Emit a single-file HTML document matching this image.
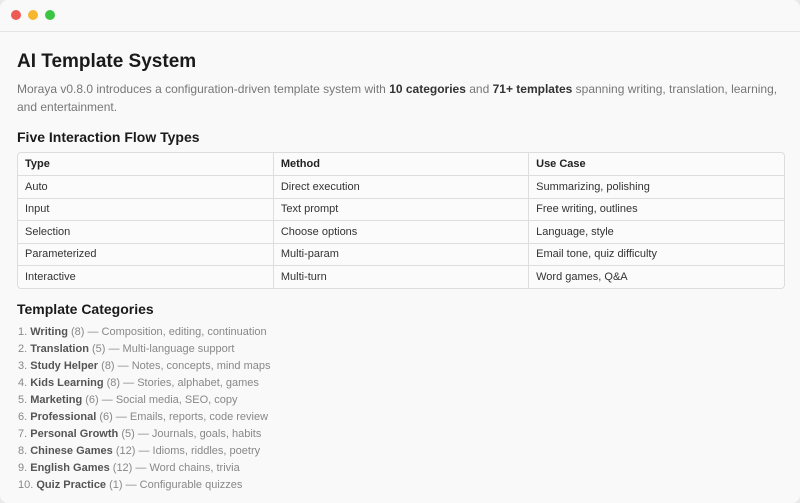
<!DOCTYPE html>
<html><head><style>
*{margin:0;padding:0;box-sizing:border-box}
body{width:800px;height:503px;background:#e9e9e9;font-family:"Liberation Sans",sans-serif;overflow:hidden}
.win{position:absolute;left:0;top:0;width:800px;height:503px;background:#f9f9f9;border-radius:8px;overflow:hidden}
.bar{height:32px;border-bottom:1px solid #e4e4e4;position:relative}
.dot{position:absolute;top:10px;width:10px;height:10px;border-radius:50%}
h1{position:absolute;left:17px;top:51px;font-size:19px;font-weight:bold;color:#1a1a1a}
p{position:absolute;left:17px;top:80px;width:770px;font-size:12px;line-height:18px;color:#777}
p b{color:#333}
h2{position:absolute;left:17px;font-size:14px;font-weight:bold;color:#1a1a1a}
.tw{position:absolute;left:17px;top:152px;width:768px;border:1px solid #ddd;border-radius:4px;overflow:hidden;background:#fbfbfb}
table{width:100%;border-collapse:collapse;font-size:11px;color:#333}
td{border-right:1px solid #ddd;border-bottom:1px solid #ddd;height:22.5px;padding:0 7px;width:256px}
td:last-child{border-right:none}
tr:last-child td{border-bottom:none}
tr:first-child td{font-weight:bold;color:#222}
ol{position:absolute;left:18px;top:324px;list-style:none;font-size:11px;line-height:17px;color:#888}
ol b{color:#555}
</style></head><body><div class="win">
<div class="bar"><div class="dot" style="left:11px;background:#ee5b55"></div><div class="dot" style="left:28px;background:#f6b630"></div><div class="dot" style="left:45px;background:#3cc443"></div></div>
<h1>AI Template System</h1>
<p>Moraya v0.8.0 introduces a configuration-driven template system with <b>10 categories</b> and <b>71+ templates</b> spanning writing, translation, learning, and entertainment.</p>
<h2 style="top:129px">Five Interaction Flow Types</h2>
<div class="tw"><table>
<tr><td>Type</td><td>Method</td><td>Use Case</td></tr>
<tr><td>Auto</td><td>Direct execution</td><td>Summarizing, polishing</td></tr>
<tr><td>Input</td><td>Text prompt</td><td>Free writing, outlines</td></tr>
<tr><td>Selection</td><td>Choose options</td><td>Language, style</td></tr>
<tr><td>Parameterized</td><td>Multi-param</td><td>Email tone, quiz difficulty</td></tr>
<tr><td>Interactive</td><td>Multi-turn</td><td>Word games, Q&amp;A</td></tr>
</table></div>
<h2 style="top:301px">Template Categories</h2>
<ol>
<li>1. <b>Writing</b> (8) — Composition, editing, continuation</li>
<li>2. <b>Translation</b> (5) — Multi-language support</li>
<li>3. <b>Study Helper</b> (8) — Notes, concepts, mind maps</li>
<li>4. <b>Kids Learning</b> (8) — Stories, alphabet, games</li>
<li>5. <b>Marketing</b> (6) — Social media, SEO, copy</li>
<li>6. <b>Professional</b> (6) — Emails, reports, code review</li>
<li>7. <b>Personal Growth</b> (5) — Journals, goals, habits</li>
<li>8. <b>Chinese Games</b> (12) — Idioms, riddles, poetry</li>
<li>9. <b>English Games</b> (12) — Word chains, trivia</li>
<li>10. <b>Quiz Practice</b> (1) — Configurable quizzes</li>
</ol>
</div></body></html>
